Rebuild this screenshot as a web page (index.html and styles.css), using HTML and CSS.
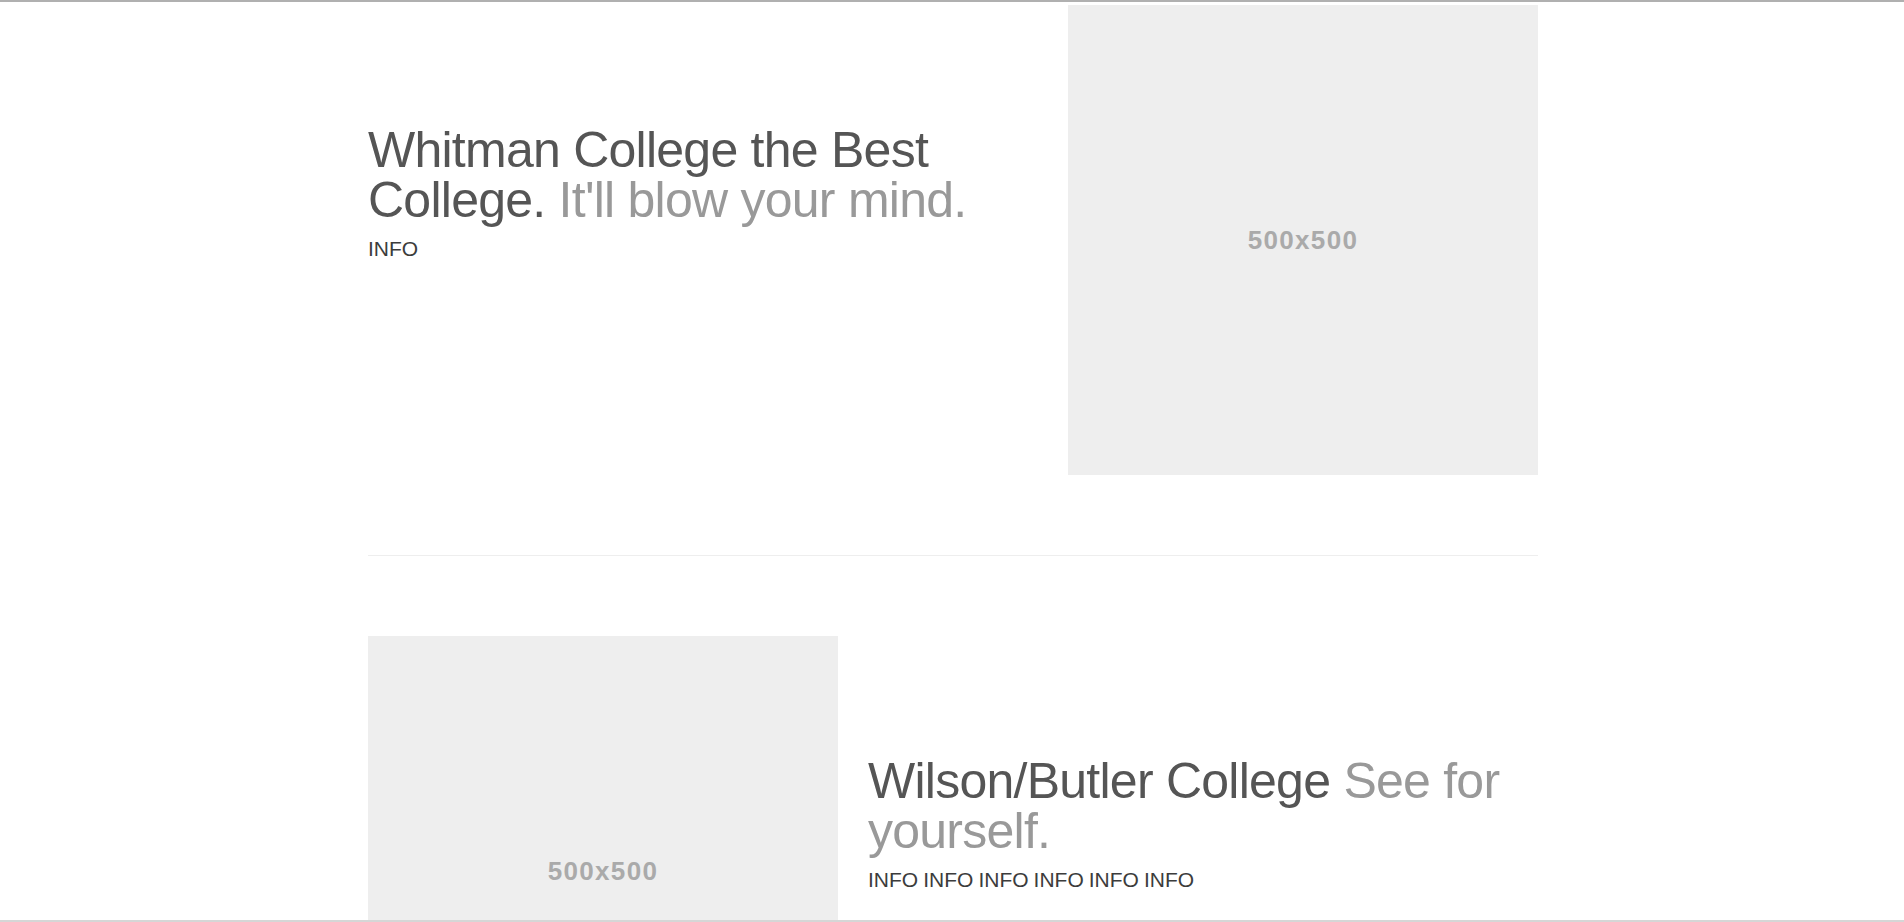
FILE: index.html
```html
<!DOCTYPE html>
<html lang="en">
<head>
<meta charset="utf-8">
<title>Colleges</title>
<link rel="stylesheet" href="styles.css">
</head>
<body>
<div class="frame"></div>
<div class="container">
  <div class="featurette">
    <div class="featurette-image pull-right"><span class="holder-text">500x500</span></div>
    <h2 class="featurette-heading">Whitman College the Best College. <span class="muted">It'll blow your mind.</span></h2>
    <p class="lead">INFO</p>
  </div>

  <hr class="featurette-divider">

  <div class="featurette">
    <div class="featurette-image pull-left"><span class="holder-text">500x500</span></div>
    <h2 class="featurette-heading">Wilson/Butler College <span class="muted">See for yourself.</span></h2>
    <p class="lead">INFO INFO INFO INFO INFO INFO</p>
  </div>
</div>
</body>
</html>
```

FILE: styles.css
```css
html {
  overflow: hidden;
}

body {
  margin: 0;
  background: #fff;
  color: #333;
  font-family: "Liberation Sans", Arial, sans-serif;
  font-size: 14px;
  line-height: 20px;
}

.frame {
  position: fixed;
  inset: 0;
  border-top: 2px solid #b0b0b0;
  border-bottom: 2px solid #d6d6d6;
  pointer-events: none;
  z-index: 10;
}

.container {
  width: 1170px;
  margin-left: calc(50% - 584px);
  padding-top: 5px;
}

.featurette {
  padding-top: 120px;
  overflow: hidden;
}

.featurette-image {
  width: 470px;
  height: 470px;
  margin-top: -120px;
  background: #eee;
  display: flex;
  align-items: center;
  justify-content: center;
}

.pull-right {
  float: right;
  margin-left: 40px;
}

.pull-left {
  float: left;
  margin-right: 30px;
}

.holder-text {
  color: #aaa;
  font-family: "Liberation Sans", Arial, sans-serif;
  font-weight: bold;
  font-size: 26px;
  letter-spacing: 1.3px;
  line-height: 1;
}

.featurette-heading {
  margin: 0 0 9px;
  color: #555;
  font-size: 50px;
  font-weight: 300;
  line-height: 1;
  letter-spacing: -0.75px;
}

.muted {
  color: #999;
}

.lead {
  margin: 0 0 20px;
  color: #3c3c3c;
  font-size: 21px;
  font-weight: 200;
  line-height: 30px;
  word-spacing: -0.8px;
}

.featurette-divider {
  margin: 80px 0;
  height: 0;
  border: 0;
  border-top: 1px solid #eee;
}
```
